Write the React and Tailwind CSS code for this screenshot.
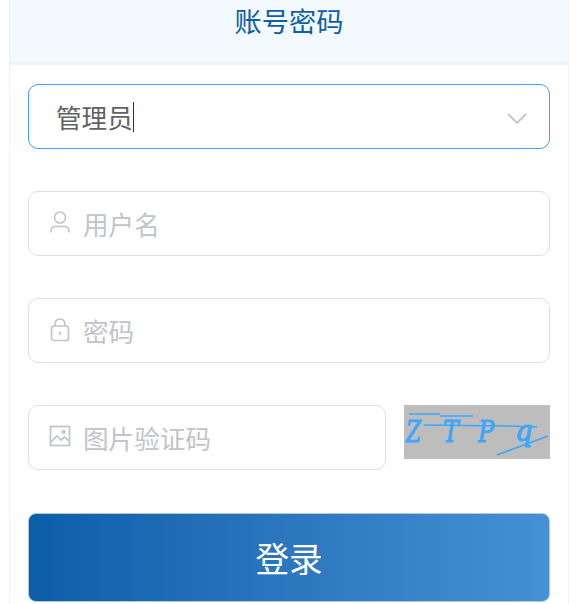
import React from "react";

const font = { fontFamily: '"Noto Sans CJK SC", sans-serif' };

function Field({ icon, text, className = "" }) {
  return (
    <div className={`h-[65px] flex items-center rounded-[10px] border border-[#dcdfe6] bg-white ${className}`}>
      <span className="w-[54px] flex justify-center pl-[7px] text-[#c0c4cc]">{icon}</span>
      <span className="text-[25.6px] leading-none pt-[1px] text-[#c0c4cc]">{text}</span>
    </div>
  );
}

const UserIcon = (
  <svg width="20" height="23" viewBox="0 0 20 23" fill="none" stroke="currentColor" strokeWidth="1.6" className="-mt-[2px]">
    <circle cx="10" cy="6.500" r="5.500" />
    <path d="M1 21.500v-1c0-3 2-5 5-5h8c3 0 5 2 5 5v1" />
  </svg>
);
const LockIcon = (
  <svg width="20" height="24" viewBox="0 0 20 24" fill="none" stroke="currentColor" strokeWidth="1.7" className="-mt-[2px]">
    <rect x="1.500" y="8" width="17" height="14.500" rx="2.500" />
    <path d="M5 8V6a5 5 0 0 1 10 0v2" />
    <path d="M10 13.500v3.500" />
  </svg>
);
const PicIcon = (
  <svg width="22" height="22" viewBox="0 0 22 22" fill="none" stroke="currentColor" strokeWidth="1.700" className="-mt-[3px]">
    <rect x="1.500" y="1.500" width="19" height="19" />
    <path d="M2 17l6-6 4 4 3.500-3 5 4" />
    <circle cx="14.500" cy="7" r="1.300" />
  </svg>
);

export default function App() {
  return (
    <div className="w-[588px] h-[604px] overflow-hidden bg-white" style={font}>
      <div className="ml-[9px] w-[560px] h-[604px] border-x border-[#f0f0f2]">
        <div className="h-[65px] bg-[#f2f9ff] border-b-[3px] border-[#f2f3f5] flex justify-center">
          <span className="text-[27.2px] leading-[40px] text-[#0e5ea8]">账号密码</span>
        </div>
        <div className="px-[18px] pt-[19px] flex flex-col">
          <div className="h-[65px] flex items-center justify-between rounded-[10px] border border-[#409eff] bg-white pl-[27px] pr-[22px]">
            <div className="flex items-center">
              <span className="text-[25.6px] leading-none pt-[1px] text-[#606266]">管理员</span>
              <span className="w-px h-[30px] bg-[#303133]"></span>
            </div>
            <svg width="20" height="12" viewBox="0 0 20 12" fill="none" stroke="#c0c4cc" strokeWidth="1.800" className="mt-[5px]">
              <path d="M1 1l9 9 9-9" />
            </svg>
          </div>
          <Field icon={UserIcon} text="用户名" className="mt-[42px]" />
          <Field icon={LockIcon} text="密码" className="mt-[42px]" />
          <div className="mt-[42px] flex justify-between items-start">
            <Field icon={PicIcon} text="图片验证码" className="w-[358px]" />
            <svg width="146" height="54" viewBox="0 0 146 54" className="block">
              <rect width="146" height="54" fill="#bdbdbd" />
              <g fill="#3ea6fb" stroke="#3ea6fb" strokeWidth="1.100" fontFamily="DejaVu Serif, serif" fontStyle="italic" fontSize="30">
                <text transform="translate(2 37) scale(0.72 1)">Z</text>
                <text transform="translate(39 37) scale(0.78 1)">T</text>
                <text transform="translate(74 37) scale(0.8 1)">P</text>
                <text transform="translate(111 36) scale(0.95 1)" fontSize="29">q</text>
              </g>
              <g stroke="#3ea6fb" strokeWidth="1.500" fill="none">
                <path d="M5 9h31M36 11h33" />
                <path d="M20 20l83 1 30 1" />
                <path d="M93 50l51-19" />
              </g>
            </svg>
          </div>
          <button className="mt-[43px] h-[89px] rounded-[8px] border border-[#b3c6dd] bg-gradient-to-r from-[#0b5ea8] to-[#4690d5] text-white text-[33.600px] leading-none flex items-center justify-center">
            登录
          </button>
        </div>
      </div>
    </div>
  );
}
